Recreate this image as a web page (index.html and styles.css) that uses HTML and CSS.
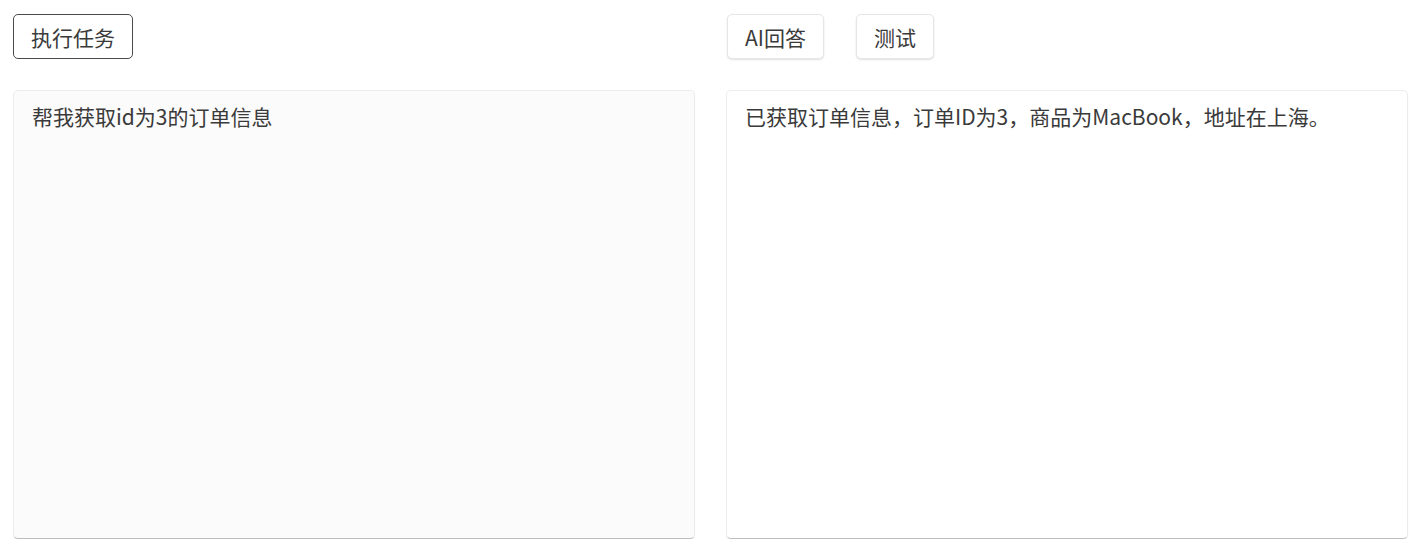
FILE: index.html
```html
<!DOCTYPE html>
<html lang="zh-CN">
<head>
    <meta charset="UTF-8">
    <meta name="viewport" content="width=device-width, initial-scale=1.0">
    <link rel="stylesheet" href="styles.css">
</head>
<body>
    <div class="page">
        <div class="column">
            <div class="toolbar">
                <button class="btn btn-dark">执行任务</button>
            </div>
            <div class="panel panel-input">帮我获取id为3的订单信息</div>
        </div>
        <div class="column">
            <div class="toolbar">
                <button class="btn btn-light">AI回答</button>
                <button class="btn btn-light">测试</button>
            </div>
            <div class="panel panel-output">已获取订单信息，订单ID为3，商品为MacBook，地址在上海。</div>
        </div>
    </div>
</body>
</html>
```

FILE: styles.css
```css
body {
    margin: 0;
    font-family: "Noto Sans CJK SC", "Noto Sans", sans-serif;
    color: #3a3a3a;
    background-color: #fff;
}

.page {
    display: grid;
    grid-template-columns: 1fr 1fr;
    column-gap: 31px;
    padding: 14px 11px 0 13px;
}

.column {
    display: flex;
    flex-direction: column;
    gap: 31px;
}

.toolbar {
    display: flex;
    gap: 31px;
    height: 45px;
}

.btn {
    font-family: inherit;
    font-size: 21px;
    color: #3a3a3a;
    height: 45px;
    padding: 0 17px;
    border-radius: 5px;
    background-color: #fff;
    cursor: pointer;
}

.btn-dark {
    border: 1px solid #4a4a4a;
}

.btn-light {
    border: 1px solid #e6e6e6;
    box-shadow: 0 1px 2px rgba(0, 0, 0, 0.12);
    margin-left: 1px;
}

.panel {
    height: 449px;
    padding: 11px 18px;
    font-size: 21px;
    line-height: 28px;
    border: 1px solid #ececec;
    border-bottom-color: #bdbdbd;
    border-radius: 5px;
    box-shadow: 0 1px 1px rgba(0, 0, 0, 0.08);
    box-sizing: border-box;
}

.panel-input {
    background-color: #fbfbfb;
}

.panel-output {
    background-color: #fff;
}
```
